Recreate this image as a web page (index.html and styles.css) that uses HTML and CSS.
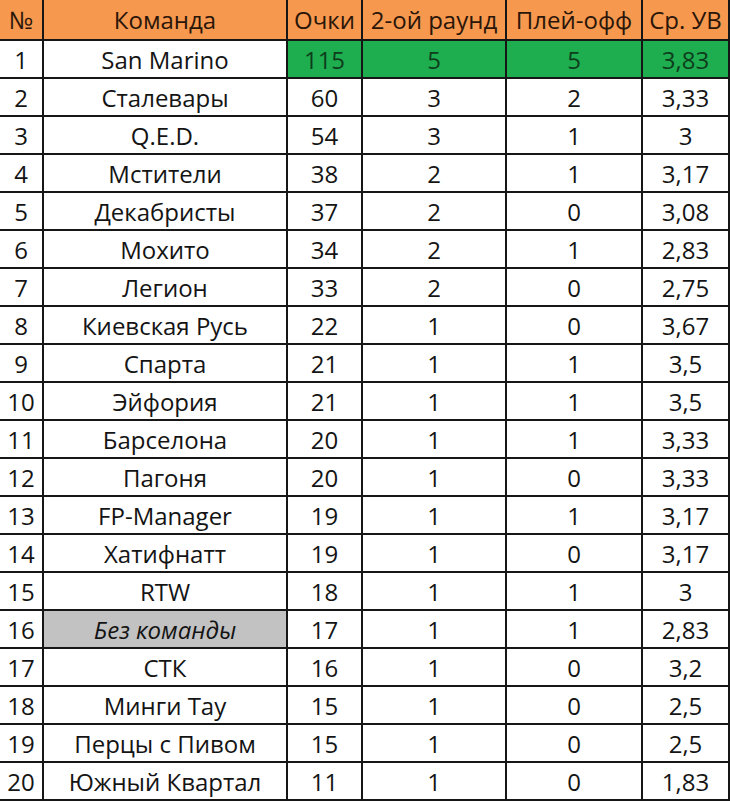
FILE: index.html
```html
<!DOCTYPE html>
<html lang="ru">
<head>
<meta charset="utf-8">
<title>Таблица</title>
<link rel="stylesheet" href="styles.css">
</head>
<body>
<table class="standings">
  <colgroup>
    <col class="c-num"><col class="c-team"><col class="c-pts"><col class="c-r2"><col class="c-po"><col class="c-uv">
  </colgroup>
  <thead>
    <tr><th>№</th><th>Команда</th><th>Очки</th><th>2-ой раунд</th><th>Плей-офф</th><th>Ср. УВ</th></tr>
  </thead>
  <tbody>
    <tr class="leader"><td>1</td><td>San Marino</td><td class="good">115</td><td class="good">5</td><td class="good">5</td><td class="good">3,83</td></tr>
    <tr><td>2</td><td>Сталевары</td><td>60</td><td>3</td><td>2</td><td>3,33</td></tr>
    <tr><td>3</td><td>Q.E.D.</td><td>54</td><td>3</td><td>1</td><td>3</td></tr>
    <tr><td>4</td><td>Мстители</td><td>38</td><td>2</td><td>1</td><td>3,17</td></tr>
    <tr><td>5</td><td>Декабристы</td><td>37</td><td>2</td><td>0</td><td>3,08</td></tr>
    <tr><td>6</td><td>Мохито</td><td>34</td><td>2</td><td>1</td><td>2,83</td></tr>
    <tr><td>7</td><td>Легион</td><td>33</td><td>2</td><td>0</td><td>2,75</td></tr>
    <tr><td>8</td><td>Киевская Русь</td><td>22</td><td>1</td><td>0</td><td>3,67</td></tr>
    <tr><td>9</td><td>Спарта</td><td>21</td><td>1</td><td>1</td><td>3,5</td></tr>
    <tr><td>10</td><td>Эйфория</td><td>21</td><td>1</td><td>1</td><td>3,5</td></tr>
    <tr><td>11</td><td>Барселона</td><td>20</td><td>1</td><td>1</td><td>3,33</td></tr>
    <tr><td>12</td><td>Пагоня</td><td>20</td><td>1</td><td>0</td><td>3,33</td></tr>
    <tr><td>13</td><td>FP-Manager</td><td>19</td><td>1</td><td>1</td><td>3,17</td></tr>
    <tr><td>14</td><td>Хатифнатт</td><td>19</td><td>1</td><td>0</td><td>3,17</td></tr>
    <tr><td>15</td><td>RTW</td><td>18</td><td>1</td><td>1</td><td>3</td></tr>
    <tr><td>16</td><td class="noteam">Без команды</td><td>17</td><td>1</td><td>1</td><td>2,83</td></tr>
    <tr><td>17</td><td>СТК</td><td>16</td><td>1</td><td>0</td><td>3,2</td></tr>
    <tr><td>18</td><td>Минги Тау</td><td>15</td><td>1</td><td>0</td><td>2,5</td></tr>
    <tr><td>19</td><td>Перцы с Пивом</td><td>15</td><td>1</td><td>0</td><td>2,5</td></tr>
    <tr><td>20</td><td>Южный Квартал</td><td>11</td><td>1</td><td>0</td><td>1,83</td></tr>
  </tbody>
</table>
</body>
</html>
```
FILE: styles.css
```css
html, body {
  margin: 0;
  padding: 0;
  background: #ffffff;
}

.standings {
  border-collapse: collapse;
  table-layout: fixed;
  width: 729px;
  font-family: "Open Sans", Lato, sans-serif;
  font-size: 24px;
  line-height: 30px;
  color: #141414;
}

.c-num { width: 43px; }
.c-team { width: 244px; }
.c-pts { width: 75px; }
.c-r2 { width: 144px; }
.c-po { width: 136px; }
.c-uv { width: 87px; }

.standings th,
.standings td {
  border: 2px solid #161616;
  padding: 0;
  text-align: center;
  white-space: nowrap;
  overflow: hidden;
}

.standings th {
  height: 39px;
  background: #f7984f;
  color: #2a1608;
  font-weight: normal;
  border-top: none;
}

.standings td {
  height: 34px;
  padding-top: 2px;
}

.standings tr > :first-child {
  border-left: none;
}

.standings td.good {
  background: #1fae4f;
  color: #0d3d1c;
}

.standings td.noteam {
  background: #c2c2c2;
  font-style: italic;
}
```
